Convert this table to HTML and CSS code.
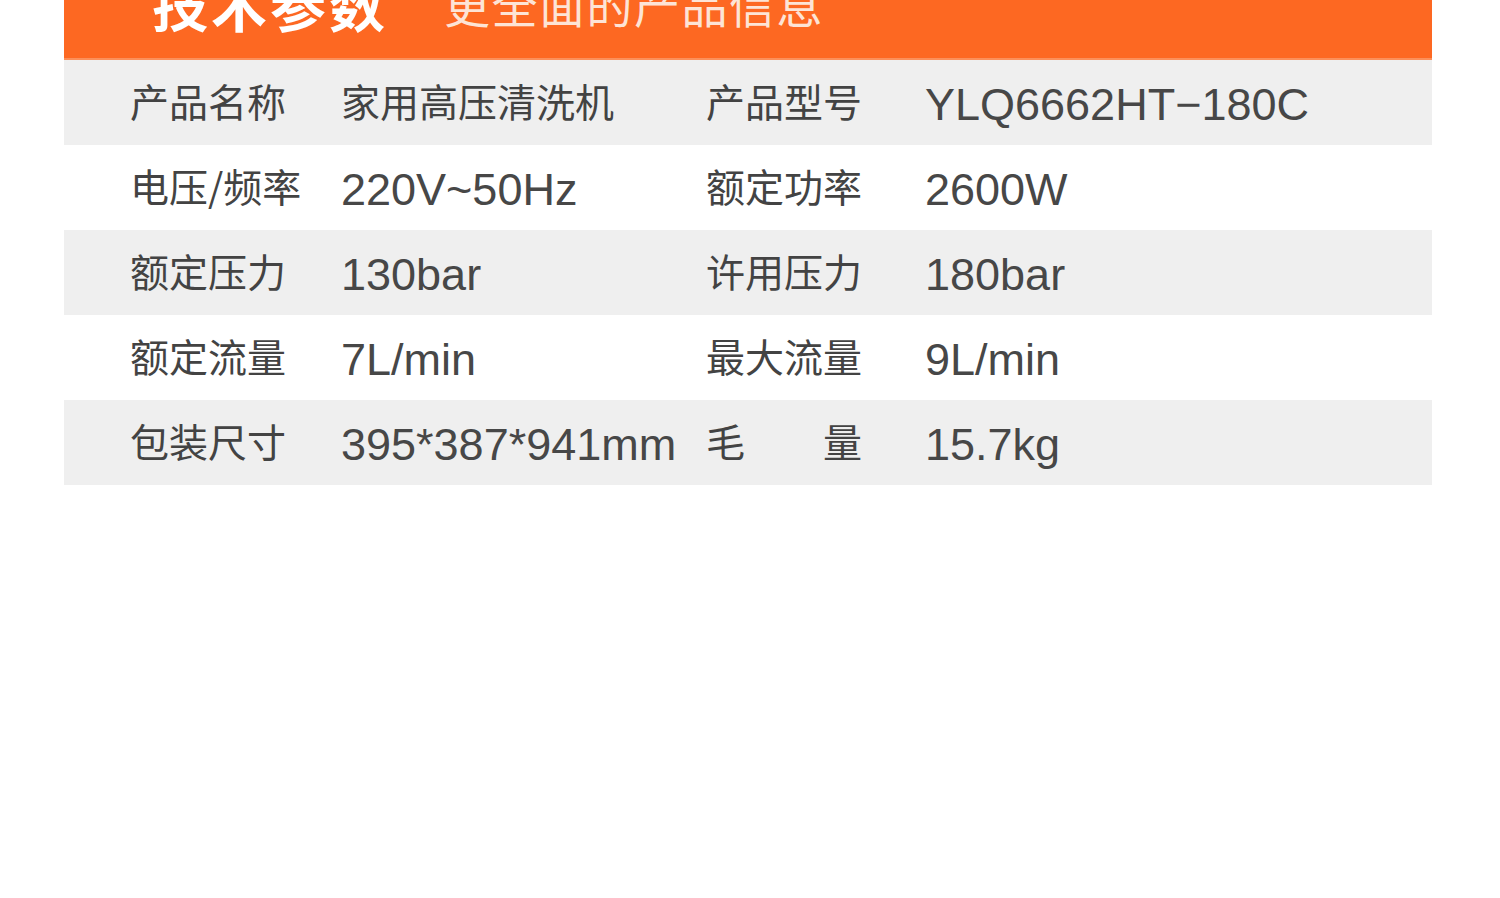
FILE: index.html
```html
<!DOCTYPE html>
<html lang="zh-CN">
<head>
  <meta charset="UTF-8" />
  <meta name="viewport" content="width=device-width, initial-scale=1" />
  <title>技术参数</title>
  <link rel="stylesheet" href="styles.css">
</head>
<body>

  <div class="specs">
    <div class="specs-head">
      <div class="head-inner">
        <span class="head-title">技术参数</span>
        <span class="head-sub">更全面的产品信息</span>
      </div>
    </div>

    <div class="row shade">
      <span class="label">产品名称</span>
      <span class="value">家用高压清洗机</span>
      <span class="label">产品型号</span>
      <span class="value num">YLQ6662HT−180C</span>
    </div>

    <div class="row">
      <span class="label">电压/频率</span>
      <span class="value num">220V~50Hz</span>
      <span class="label">额定功率</span>
      <span class="value num">2600W</span>
    </div>

    <div class="row shade">
      <span class="label">额定压力</span>
      <span class="value num">130bar</span>
      <span class="label">许用压力</span>
      <span class="value num">180bar</span>
    </div>

    <div class="row">
      <span class="label">额定流量</span>
      <span class="value num">7L/min</span>
      <span class="label">最大流量</span>
      <span class="value num">9L/min</span>
    </div>

    <div class="row shade">
      <span class="label">包装尺寸</span>
      <span class="value num">395*387*941mm</span>
      <span class="label spread"><span>毛</span><span>量</span></span>
      <span class="value num">15.7kg</span>
    </div>
  </div>

</body>
</html>
```

FILE: styles.css
```css
body {
  margin: 0;
  background: #ffffff;
  font-family: 'Noto Sans CJK SC', 'Noto Sans', sans-serif;
  color: #434343;
}

.specs {
  width: 1368px;
  margin-left: 64px;
}

.specs-head {
  height: 58px;
  overflow: hidden;
  background: #fd6822;
  border-bottom: 2px solid #fc8f5a;
}

.head-inner {
  display: flex;
  align-items: center;
  height: 56px;
  margin-top: -25px;
  padding-left: 88px;
  color: #fff;
  line-height: 1;
}

.head-title {
  font-size: 56px;
  font-weight: bold;
  letter-spacing: 3px;
}

.head-sub {
  margin-left: 56px;
  font-size: 46px;
  letter-spacing: 1.5px;
  color: #fde4d6;
}

.row {
  display: grid;
  grid-template-columns: 211px 365px 219px 1fr;
  align-items: center;
  height: 85px;
  padding-left: 66px;
}

.row.shade {
  background: #efefef;
}

.label,
.value {
  font-size: 39px;
  white-space: nowrap;
  padding-bottom: 5px;
}

.num {
  font-family: 'Liberation Sans', Arial, sans-serif;
  font-size: 45px;
  color: #474747;
  padding-bottom: 0;
  padding-top: 5px;
}

.spread {
  display: flex;
  justify-content: space-between;
  width: 156px;
}
```
